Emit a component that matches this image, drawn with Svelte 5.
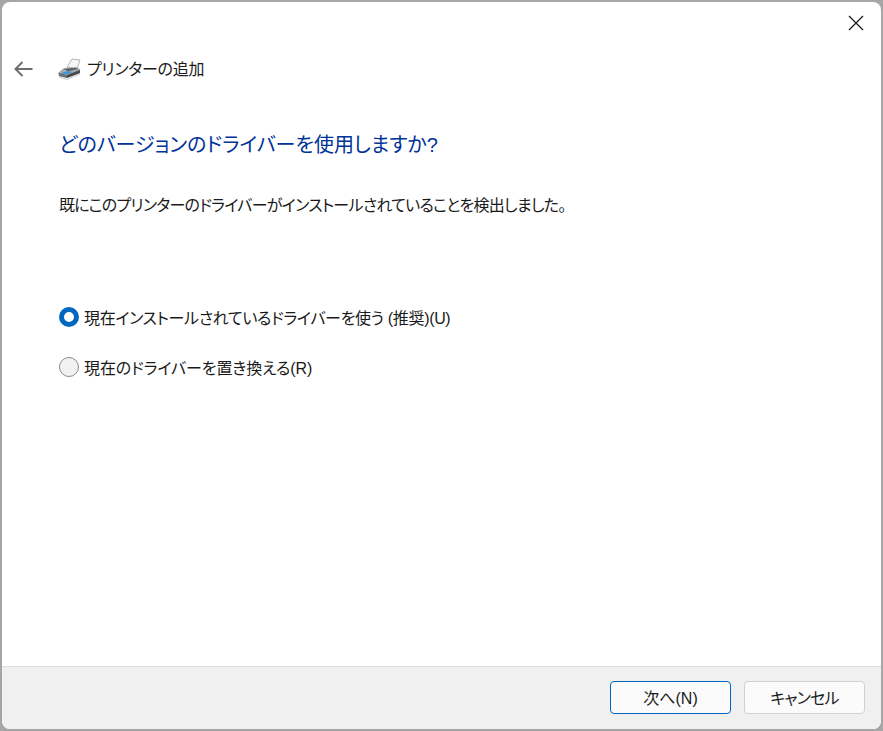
<script>
  let choice = $state("keep");
</script>

<div class="shell">
  <div class="dialog">
    <div class="titlebar">
      <button class="close" aria-label="閉じる">
        <svg width="16" height="16" viewBox="0 0 16 16"><path d="M1 1 L15 15 M15 1 L1 15" stroke="#1a1a1a" stroke-width="1.3" fill="none" /></svg>
      </button>
    </div>

    <div class="nav">
      <button class="back" aria-label="戻る">
        <svg width="20" height="16" viewBox="0 0 20 16"><path d="M1.5 8 H18.5 M8.5 1 L1.5 8 L8.5 15" stroke="#6e6e6e" stroke-width="2" fill="none" /></svg>
      </button>
      <svg class="printer" width="26" height="24" viewBox="0 0 26 24">
        <path d="M11 10 L16 2 L24 3 L21 12 Z" fill="#f6f6f6" stroke="#a4a4a4" stroke-width="0.8" />
        <path d="M2 16 L8 11 L20 10 L24 12 L24 16 L11 21 L3 19 Z" fill="#a4a8ac" />
        <path d="M8 12 L20 11 L22 12 L12 14 Z" fill="#55595e" />
        <path d="M3 19 L3 16 L11 18 L11 21 Z" fill="#6a6f74" />
        <path d="M11 18 L24 13 L24 16 L11 21 Z" fill="#44494e" />
        <path d="M5 16 L12 14 L17 15 L10 17.5 Z" fill="#3a94d8" />
        <path d="M3 20 L11 22.5 L24 17" stroke="#c8c8c8" stroke-width="1" fill="none" />
      </svg>
      <span class="nav-title">プリンターの追加</span>
    </div>

    <main class="content">
      <h1>どのバージョンのドライバーを使用しますか?</h1>
      <p>既にこのプリンターのドライバーがインストールされていることを検出しました。</p>

      <div class="options">
        <label class="option first">
          <input type="radio" bind:group={choice} value="keep" />
          <span class="dot"></span>
          <span>現在インストールされているドライバーを使う (推奨)(U)</span>
        </label>
        <label class="option">
          <input type="radio" bind:group={choice} value="replace" />
          <span class="dot"></span>
          <span>現在のドライバーを置き換える(R)</span>
        </label>
      </div>
    </main>

    <footer class="footer">
      <button class="btn primary">次へ(N)</button>
      <button class="btn cancel">キャンセル</button>
    </footer>
  </div>
</div>

<style>
  :global(body) {
    margin: 0;
    background: #a6a6a6;
  }
  .shell {
    width: 883px;
    height: 731px;
    padding: 2px;
    box-sizing: border-box;
    background: #a6a6a6;
    font-family: "Liberation Sans", "Noto Sans CJK JP", sans-serif;
    font-feature-settings: "palt";
    color: #1a1a1a;
  }
  .dialog {
    height: 100%;
    display: flex;
    flex-direction: column;
    background: #fff;
    border-radius: 8px;
    overflow: hidden;
  }
  .titlebar {
    height: 43px;
    flex: none;
    display: flex;
    justify-content: flex-end;
  }
  .close {
    width: 26px;
    height: 26px;
    margin: 8px 12px 0 0;
    padding: 0;
    border: none;
    background: none;
    display: flex;
    align-items: center;
    justify-content: center;
  }
  .nav {
    height: 48px;
    flex: none;
    display: flex;
    align-items: center;
    padding-left: 12px;
  }
  .back {
    width: 20px;
    height: 16px;
    padding: 0;
    border: none;
    background: none;
    display: flex;
    margin-right: 22px;
  }
  .printer {
    margin-right: 5px;
  }
  .nav-title {
    font-size: 16px;
    letter-spacing: -0.25px;
    margin-top: -2px;
    color: #1a1a1a;
  }
  .content {
    flex: 1;
    padding-left: 57px;
  }
  h1 {
    margin: 38px 0 0;
    font-size: 20px;
    line-height: 28px;
    font-weight: 400;
    color: #003399;
  }
  p {
    margin: 35px 0 0;
    font-size: 16px;
    line-height: 24px;
    letter-spacing: -0.73px;
  }
  .options {
    margin-top: 87px;
    display: flex;
    flex-direction: column;
    gap: 26px;
  }
  .option {
    display: flex;
    align-items: center;
    gap: 5px;
    height: 24px;
    font-size: 16px;
    letter-spacing: -0.1px;
  }
  .option.first {
    letter-spacing: -0.33px;
  }
  .option input {
    position: absolute;
    opacity: 0;
    width: 0;
    height: 0;
    margin: 0;
  }
  .dot {
    width: 20px;
    height: 20px;
    box-sizing: border-box;
    border-radius: 50%;
    border: 1px solid #8a8a8a;
    background: #f2f2f2;
    flex: none;
  }
  .option input:checked + .dot {
    border: 5px solid #0067c0;
    background: #fff;
  }
  .footer {
    height: 63px;
    flex: none;
    box-sizing: border-box;
    border-top: 1px solid #dfdfdf;
    background: #f0f0f0;
    display: flex;
    justify-content: flex-end;
    gap: 13px;
    padding: 14px 16px 0 0;
  }
  .btn {
    width: 121px;
    height: 33px;
    box-sizing: border-box;
    border: 1px solid #d0d0d0;
    border-radius: 4px;
    background: #fbfbfb;
    font: inherit;
    font-size: 16px;
    color: #1a1a1a;
    padding: 0 0 2px;
  }
  .btn.primary {
    border-color: #0067c0;
  }
  .btn.cancel {
    letter-spacing: -0.8px;
  }
</style>
